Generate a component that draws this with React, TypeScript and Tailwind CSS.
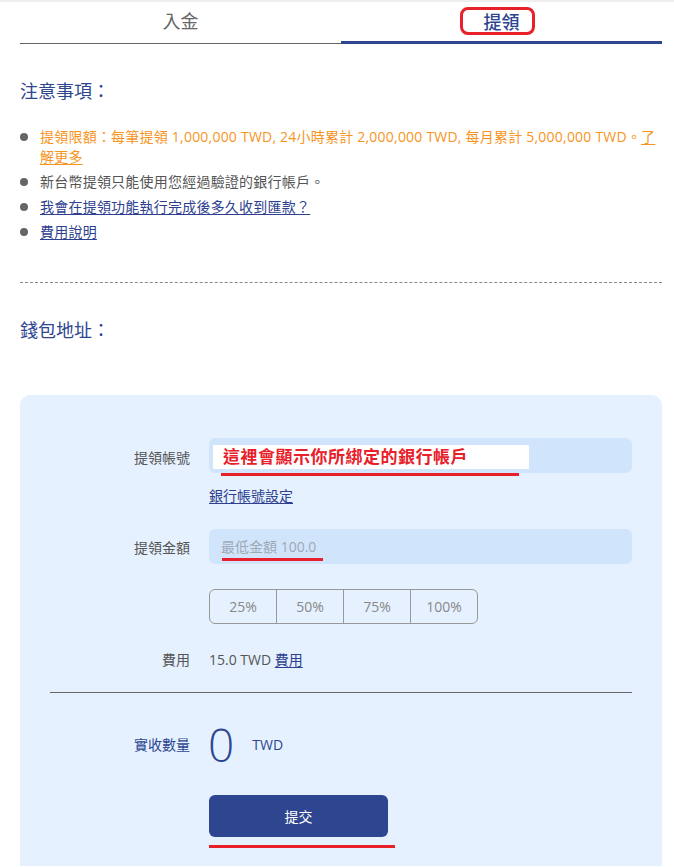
import React from "react";

const font = {
  fontFamily: '"Open Sans", "Noto Sans CJK TC", sans-serif',
};

const notes = [
  { kind: "gray", text: "新台幣提領只能使用您經過驗證的銀行帳戶。" },
  { kind: "link", text: "我會在提領功能執行完成後多久收到匯款？" },
  { kind: "link", text: "費用說明" },
];

const percents = ["25%", "50%", "75%", "100%"];

const Bullet = () => (
  <span className="mt-[6px] mr-[12px] h-[8px] w-[8px] shrink-0 rounded-full bg-[#666]" />
);

export default function App() {
  return (
    <div className="w-[674px] bg-white text-[14px]" style={font}>
      <div className="h-[2px] bg-[#eeeeee]" />

      {/* Tabs */}
      <div className="pl-5 pr-3">
        <div className="grid grid-cols-2">
          <div className="flex h-[42px] items-center justify-center border-b border-[#666] pb-[2px] text-[18px] text-[#666]">
            入金
          </div>
          <div className="relative flex h-[42px] items-center justify-center border-b-[3px] border-[#2e4690] text-[18px] font-medium text-[#2e4690]">
            <span className="relative top-[1px]">提領</span>
            <span className="absolute left-[119px] top-[5px] h-[28px] w-[75px] rounded-[8px] border-[3px] border-[#e8202a]" />
          </div>
        </div>
      </div>

      {/* Notes */}
      <div className="pl-5 pr-3">
        <h2 className="mt-[34px] text-[18px] leading-[26px] text-[#2e4690]">注意事項：</h2>
        <ul className="mt-[23px] space-y-[5px] text-[14px] leading-[20px] tracking-[0.22px]">
          <li className="flex">
            <Bullet />
            <span className="text-[#f7941d]">
              提領限額：每筆提領 1,000,000 TWD, 24小時累計 2,000,000 TWD, 每月累計 5,000,000 TWD。
              <span className="underline underline-offset-2">了解更多</span>
            </span>
          </li>
          {notes.map((n, i) => (
            <li key={i} className="flex">
              <Bullet />
              <span
                className={
                  n.kind === "gray"
                    ? "text-[#555]"
                    : "text-[#2e3f8f] underline underline-offset-2"
                }
              >
                {n.text}
              </span>
            </li>
          ))}
        </ul>

        <div className="mt-[40px] border-t border-dashed border-[#888]" />

        <h2 className="mt-[34px] text-[18px] leading-[26px] text-[#2e4690]">錢包地址：</h2>
      </div>

      {/* Form card */}
      <div className="ml-5 mr-3 mt-[52px] rounded-t-[10px] bg-[#e5f1fe] pb-[18px] pl-[30px] pr-[30px] pt-[43px]">
        <div className="flex">
          <div className="w-[140px] pt-[9px] text-right text-[#555]">提領帳號</div>
          <div className="ml-[19px] flex-1">
            <div className="relative h-[35px] rounded-[6px] bg-[#d0e5fb] pl-[4px] pt-[7px]">
              <div className="flex h-[24px] w-[316px] items-center bg-white pl-[10px] text-[17px] font-bold tracking-[0.5px] text-[#e8202a]">
                這裡會顯示你所綁定的銀行帳戶
              </div>
              <span className="absolute left-[12px] top-[35px] h-[3px] w-[298px] bg-[#e8202a]" />
            </div>
            <div className="mt-[12px] text-[#2e3f8f] underline underline-offset-2">銀行帳號設定</div>
          </div>
        </div>

        <div className="mt-[23px] flex">
          <div className="w-[140px] pt-[8px] text-right text-[#555]">提領金額</div>
          <div className="ml-[19px] flex-1">
            <div className="relative flex h-[35px] items-center rounded-[6px] bg-[#d0e5fb] pl-[12px] text-[#a0a8b4]">
              最低金額 100.0
              <span className="absolute left-[13px] top-[29px] h-[3px] w-[101px] bg-[#e8202a]" />
            </div>
            <div className="mt-[25px] flex h-[35px] w-[269px] overflow-hidden rounded-[6px] border border-[#999]">
              {percents.map((p, i) => (
                <div
                  key={p}
                  className={`flex flex-1 items-center justify-center text-[#888] ${
                    i > 0 ? "border-l border-[#999]" : ""
                  }`}
                >
                  {p}
                </div>
              ))}
            </div>
          </div>
        </div>

        <div className="mt-[25px] flex">
          <div className="w-[140px] text-right text-[#555]">費用</div>
          <div className="ml-[19px] text-[#555]">
            15.0 TWD <span className="text-[#2e3f8f] underline underline-offset-2">費用</span>
          </div>
        </div>

        <div className="mt-[22px] border-t border-[#666]" />

        <div className="mt-[28px] flex items-center">
          <div className="w-[140px] text-right text-[#2e4690]">實收數量</div>
          <div className="ml-[18px] text-[46px] font-light leading-[46px] text-[#2e4690]">0</div>
          <div className="ml-[18px] text-[#2e4690]">TWD</div>
        </div>

        <div className="ml-[159px] mt-[28px]">
          <button className="h-[42px] w-[179px] rounded-[6px] bg-[#2e4690] text-white">提交</button>
          <div className="mt-[8px] h-[3px] w-[186px] bg-[#e8202a]" />
        </div>
      </div>
    </div>
  );
}
